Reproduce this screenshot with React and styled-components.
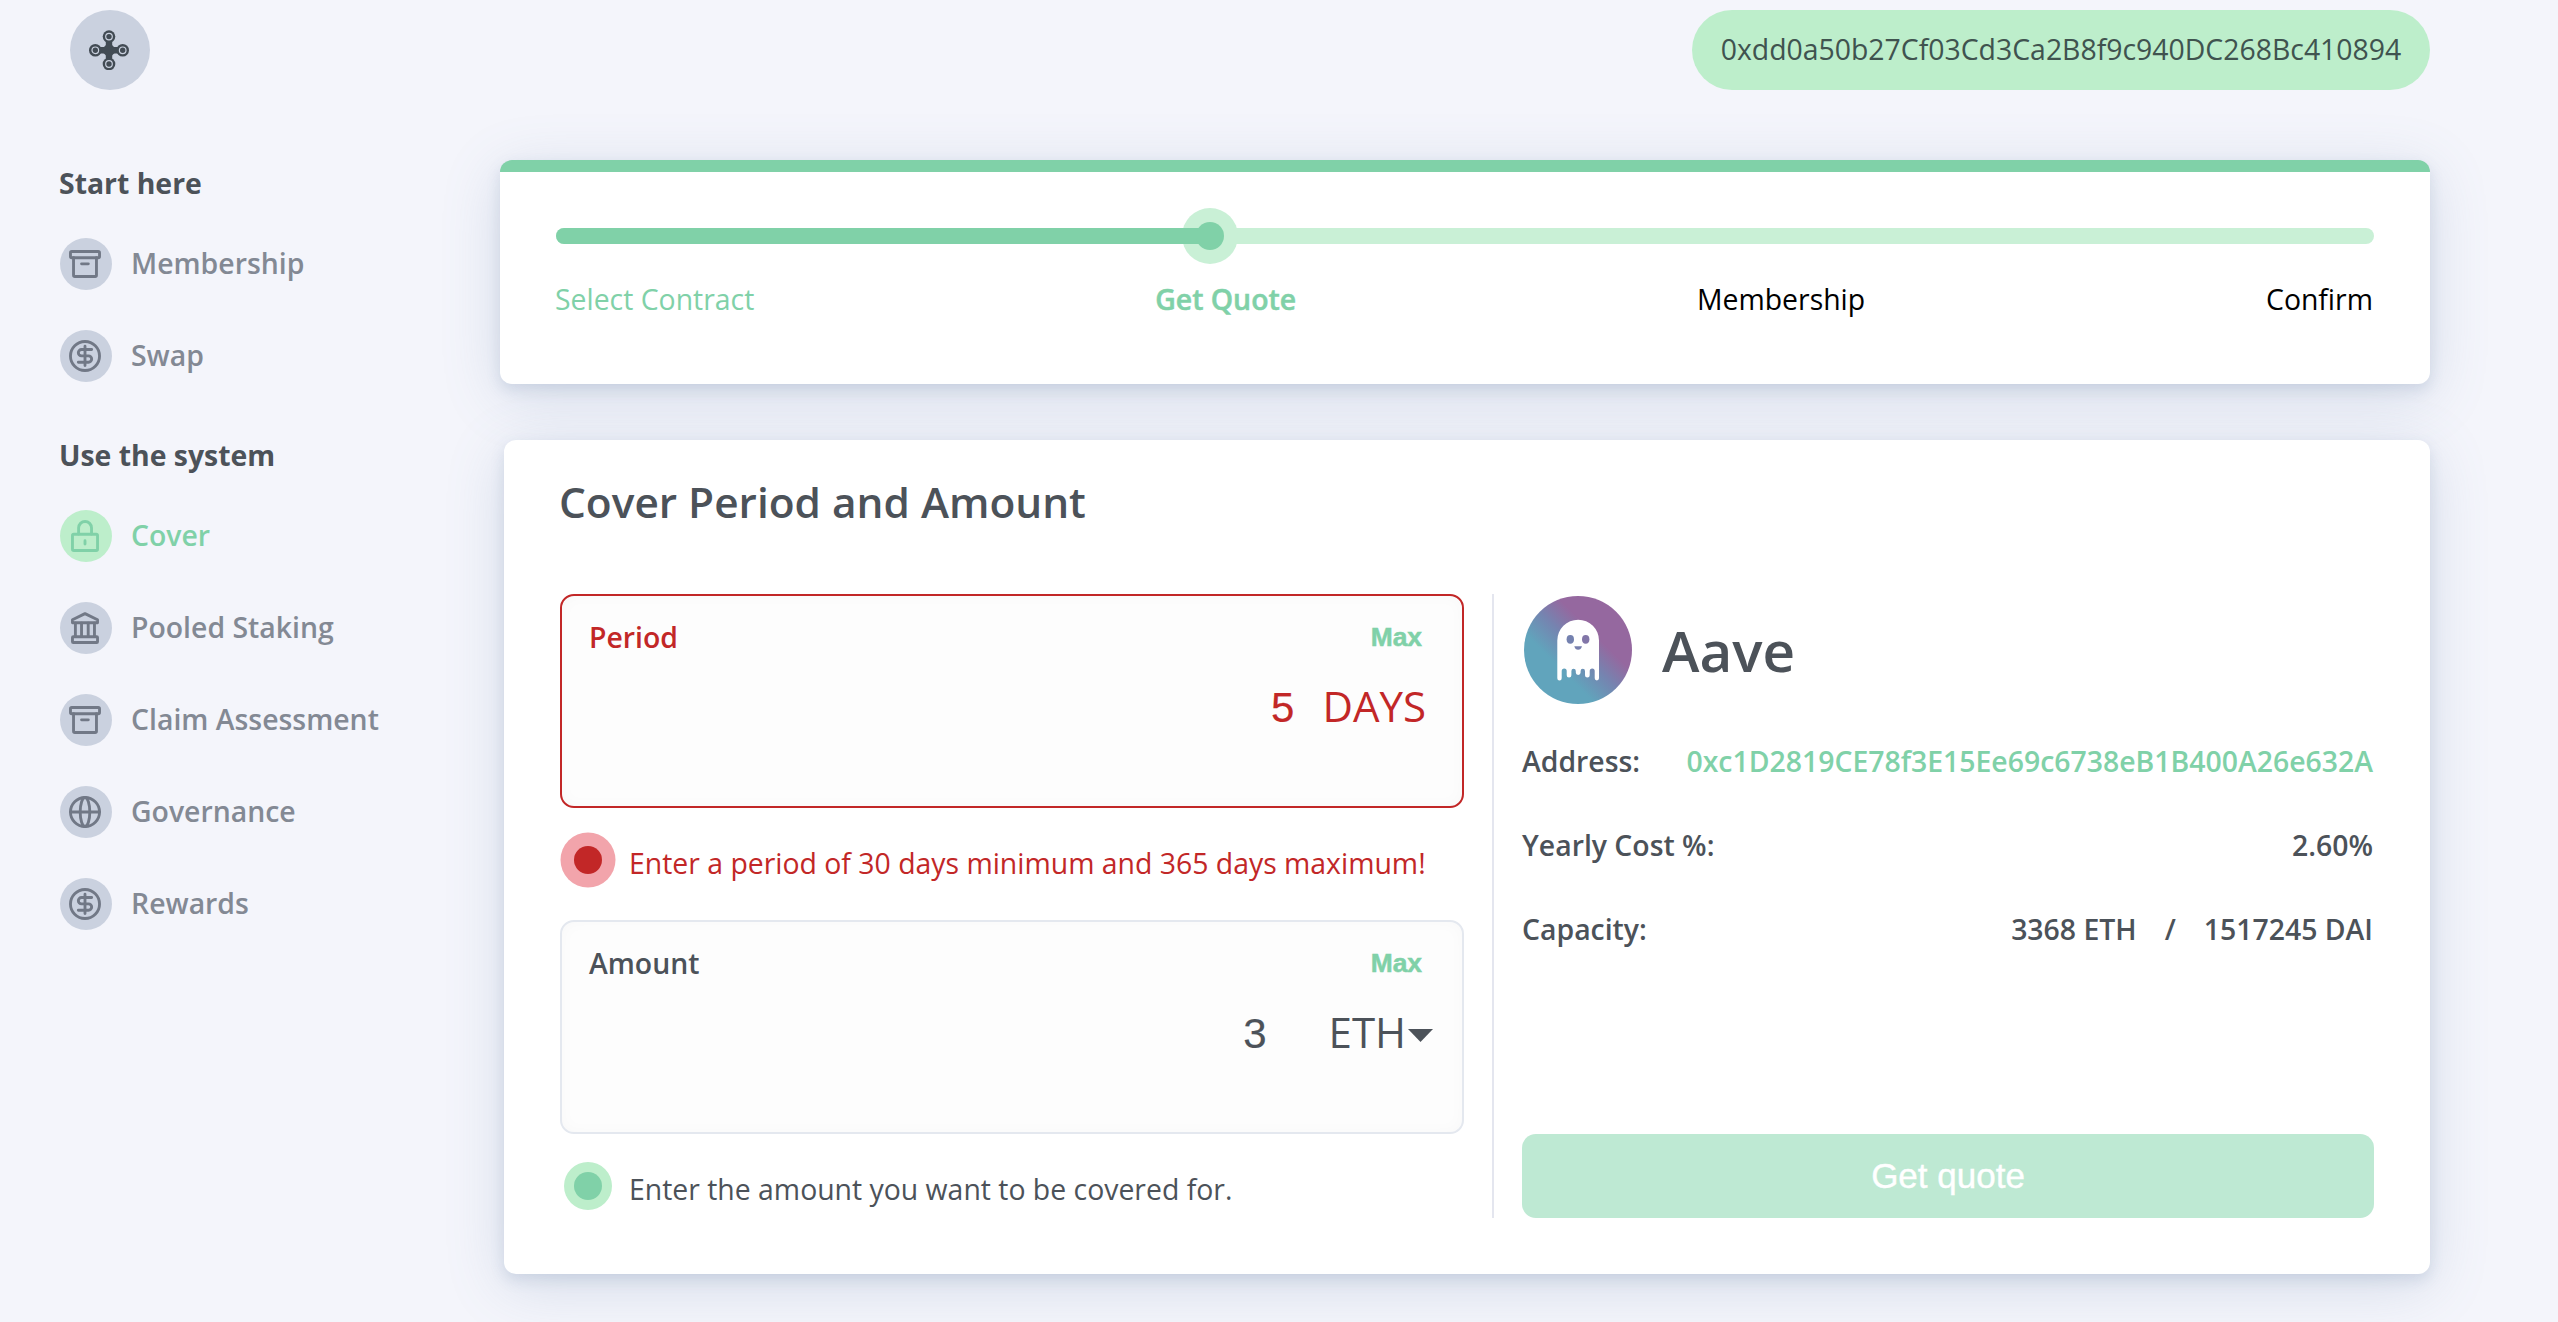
import React from "react";
import styled, { createGlobalStyle } from "styled-components";

const color = {
  page: "#f4f5fb",
  text: "#4c5259",
  muted: "#838994",
  icon: "#717886",
  iconDark: "#424b54",
  disc: "#cad1df",
  primary: "#80d1a8",
  primaryLight: "#bdeecb",
  track: "#c9f0d6",
  disabled: "#bee9d3",
  error: "#c22727",
  errorLight: "#f2a4ab",
  line: "#e4e6ef",
};

const GlobalStyle = createGlobalStyle`
  * { box-sizing: border-box; }
  body {
    margin: 0;
    background: ${color.page};
    color: ${color.text};
    font-family: "Open Sans", "Noto Sans", sans-serif;
    font-size: 28.4px;
    line-height: 38px;
  }
`;

const Page = styled.div`
  height: 1322px;
  overflow: hidden;
  white-space: nowrap;
`;

const Header = styled.header`
  display: flex;
  justify-content: space-between;
  width: 2430px;
  padding: 10px 0 0 70px;
`;

const LogoDisc = styled.div`
  display: flex;
  align-items: center;
  justify-content: center;
  width: 80px;
  height: 80px;
  padding-right: 2px;
  border-radius: 50%;
  background: ${color.disc};
`;

const AccountPill = styled.div`
  display: flex;
  align-items: center;
  justify-content: center;
  width: 738px;
  height: 80px;
  padding-bottom: 2px;
  border-radius: 40px;
  background: ${color.primaryLight};
  color: #40534f;
`;

const Body = styled.div`
  display: flex;
`;

const Sidebar = styled.nav`
  flex: none;
  display: flex;
  flex-direction: column;
  gap: 54px;
  width: 500px;
  padding: 74px 0 0 59px;
`;

const NavGroup = styled.section`
  display: flex;
  flex-direction: column;
  gap: 36px;
`;

const NavHeading = styled.h3`
  margin: 0;
  font-size: inherit;
  font-weight: 700;
`;

const NavList = styled.div`
  display: flex;
  flex-direction: column;
  gap: 40px;
  padding-left: 1px;
`;

const NavItem = styled.a`
  display: flex;
  align-items: center;
  gap: 19px;
  font-weight: 600;
  color: ${(p) => (p.$active ? color.primary : color.muted)};
`;

const NavDisc = styled.span`
  display: flex;
  align-items: center;
  justify-content: center;
  width: 52px;
  height: 52px;
  padding-right: 2px;
  border-radius: 50%;
  background: ${(p) => (p.$active ? color.primaryLight : color.disc)};
  color: ${(p) => (p.$active ? color.primary : color.icon)};
`;

const NavLabel = styled.span`
  padding-bottom: 2px;
`;

const Main = styled.main`
  display: flex;
  flex-direction: column;
  align-items: flex-end;
  gap: 56px;
  width: 1930px;
  padding-top: 70px;
`;

const Card = styled.section`
  border-radius: 12px;
  background: #fff;
  box-shadow:
    0 6px 14px rgba(90, 118, 160, 0.17),
    0 12px 60px rgba(90, 118, 160, 0.2);
`;

const StepsCard = styled(Card)`
  width: 1930px;
  height: 224px;
  padding: 56px;
  border-top: 12px solid ${color.primary};
`;

const Track = styled.div`
  position: relative;
  height: 16px;
  border-radius: 8px;
  background: ${color.track};
`;

const TrackFill = styled.div`
  position: relative;
  width: 36%;
  height: 16px;
  border-radius: 8px;
  background: ${color.primary};
`;

const ThumbPart = styled.span`
  position: absolute;
  top: 50%;
  left: 36%;
  width: ${(p) => p.$size}px;
  height: ${(p) => p.$size}px;
  border-radius: 50%;
  background: ${(p) => p.$color};
  transform: translate(-50%, -50%);
`;

const StepLabels = styled.div`
  display: flex;
  justify-content: space-between;
  margin: 36px 1px 0 -1px;
`;

const StepLabel = styled.span`
  color: ${(p) => (p.$reached ? color.primary : "#000")};
  font-weight: ${(p) => (p.$current ? 600 : 400)};
  -webkit-text-stroke: ${(p) => (p.$current ? `0.5px ${color.primary}` : "0")};
`;

const QuoteCard = styled(Card)`
  width: 1926px;
  height: 834px;
  padding: 33px 56px 56px;
`;

const Title = styled.h2`
  margin: 0 0 63px -1px;
  font-size: 42.4px;
  font-weight: 600;
  line-height: 58px;
`;

const Columns = styled.div`
  display: grid;
  grid-template-columns: 934px 852px;
  grid-template-rows: 624px;
  column-gap: 28px;
`;

const FormColumn = styled.div`
  display: flex;
  flex-direction: column;
  gap: 32px;
  padding-right: 28px;
  border-right: 2px solid ${color.line};
`;

const FieldGroup = styled.div`
  display: flex;
  flex-direction: column;
`;

const Field = styled.div`
  height: 214px;
  padding: 22px 0 0 27px;
  border: 2px solid ${(p) => (p.$error ? color.error : "#e4e8ef")};
  border-radius: 14px;
  background: #fdfdfd;
  box-shadow: inset 0 0 16px rgba(0, 0, 0, 0.025);
  color: ${(p) => (p.$error ? color.error : color.text)};
`;

const FieldTop = styled.div`
  display: flex;
  align-items: center;
  justify-content: space-between;
  height: 38px;
  padding-right: 40px;
  font-weight: 600;
`;

const MaxButton = styled.button`
  padding: 0;
  border: 0;
  background: none;
  color: ${color.primary};
  font: 700 26.4px/30px "Liberation Sans", Arial, sans-serif;
  -webkit-text-stroke: 0.5px ${color.primary};
`;

const FieldValue = styled.div`
  display: flex;
  align-items: baseline;
  justify-content: flex-end;
  gap: ${(p) => p.$gap}px;
  margin-top: 21px;
  padding-right: ${(p) => p.$inset}px;
  font-size: 42px;
  line-height: 57px;
`;

const Digits = styled.span`
  font-family: "Liberation Sans", Arial, sans-serif;
  line-height: 48px;
  -webkit-text-stroke: 0.2px currentColor;
`;

const UnitSelect = styled.span`
  display: flex;
  align-items: center;
  gap: 2px;
`;

const Caret = styled.svg`
  margin-top: 7px;
`;

const Hint = styled.div`
  display: flex;
  align-items: center;
  gap: 27px;
  height: 56px;
  margin: 24px 0 0 14px;
  color: ${(p) => (p.$error ? color.error : color.text)};
`;

const Pulse = styled.span`
  width: 28px;
  height: 28px;
  border-radius: 50%;
  background: ${(p) => (p.$error ? color.error : color.primary)};
  box-shadow: 0 0 0
    ${(p) => (p.$error ? `13.5px ${color.errorLight}` : `10px ${color.primaryLight}`)};
`;

const HintText = styled.span`
  padding-top: 6px;
`;

const InfoColumn = styled.div`
  display: flex;
  flex-direction: column;
`;

const Contract = styled.div`
  display: flex;
  align-items: center;
  gap: 30px;
  height: 112px;
  padding-left: 2px;
`;

const ContractName = styled.span`
  padding-top: 2px;
  font-size: 56.6px;
  font-weight: 600;
  line-height: 78px;
`;

const Facts = styled.div`
  display: flex;
  flex-direction: column;
  gap: 46px;
  margin-top: 36px;
  padding-right: 1px;
  font-weight: 600;
`;

const Fact = styled.div`
  display: flex;
  justify-content: space-between;
`;

const FactValue = styled.span`
  display: flex;
  gap: 28px;
  color: ${(p) => (p.$link ? color.primary : color.text)};
`;

const SubmitButton = styled.button`
  height: 84px;
  margin-top: auto;
  padding: 0;
  border: 0;
  border-radius: 14px;
  background: ${color.disabled};
  color: #fff;
  font: 400 35px/40px "Liberation Sans", Arial, sans-serif;
  -webkit-text-stroke: 0.4px #fff;
`;

const IconSvg = ({ children }) => (
  <svg
    width="32"
    height="32"
    viewBox="0 0 24 24"
    fill="none"
    stroke="currentColor"
    strokeWidth="2.15"
    strokeLinecap="round"
    strokeLinejoin="round"
  >
    {children}
  </svg>
);

const ArchiveIcon = () => (
  <IconSvg>
    <rect x="1.1" y="2.6" width="21.8" height="4.7" rx="1" />
    <path d="M3.4 7.3V20.4a1 1 0 0 0 1 1H19.6a1 1 0 0 0 1-1V7.3M9.4 11.9H14.5" />
  </IconSvg>
);

const DollarIcon = () => (
  <IconSvg>
    <circle cx="12" cy="12" r="10.9" />
    <path d="M12 4.7V19.1M17 7.1H9.4a2.4 2.4 0 0 0 0 4.8h5.2a2.4 2.4 0 0 1 0 4.8H7" />
  </IconSvg>
);

const LockIcon = () => (
  <IconSvg>
    <rect x="2.6" y="10.7" width="18.8" height="12.2" rx="1" />
    <path d="M7.2 10.5V5.95a4.85 4.85 0 0 1 9.7 0V10.5M12 15.5V18" />
  </IconSvg>
);

const BankIcon = () => (
  <IconSvg>
    <path d="M12 1.2L21.4 5.8V8.1H2.6V5.8Z" />
    <rect x="2.6" y="18.6" width="18.8" height="4.3" rx="0.6" />
    <path d="M4.8 8.4V18.3M9.4 8.4V18.3M14.4 8.4V18.3M19.1 8.4V18.3" />
  </IconSvg>
);

const GlobeIcon = () => (
  <IconSvg>
    <circle cx="12" cy="12" r="10.9" />
    <ellipse cx="12" cy="12" rx="3.6" ry="10.9" />
    <path d="M1.1 12H22.9" />
  </IconSvg>
);

const hubs = [
  [20, 6.6],
  [6.3, 20.3],
  [33.7, 20.3],
  [20, 34],
];

const SpinnerLogo = () => (
  <svg width="40" height="40.6" viewBox="0 0 40 40.6" fill={color.iconDark}>
    <path d="M20 7V34M7 20.3H33" stroke={color.iconDark} strokeWidth="6.4" />
    <path d="M20 12L28.3 20.3L20 28.6L11.7 20.3Z" />
    {hubs.map(([x, y]) => (
      <g key={`${x}-${y}`}>
        <circle cx={x} cy={y} r="6.3" />
        <circle cx={x} cy={y} r="3.3" fill="none" stroke={color.disc} strokeWidth="1.2" />
      </g>
    ))}
  </svg>
);

const AaveLogo = () => (
  <svg width="108" height="108" viewBox="0 0 108 108">
    <defs>
      <linearGradient id="aave" gradientUnits="userSpaceOnUse" x1="0" y1="108" x2="108" y2="0">
        <stop offset="0.33" stopColor="#61a4bc" />
        <stop offset="0.5" stopColor="#7584b0" />
        <stop offset="0.65" stopColor="#95689f" />
      </linearGradient>
    </defs>
    <circle cx="54" cy="54" r="54" fill="url(#aave)" />
    <path
      fill="#fff"
      d="M33.3 44.5a20.85 20.85 0 0 1 41.7 0V82.3a2.1 2.1 0 0 1-4.3 0V75a2.5 2.5 0 0 0-5 0V79.2a2.3 2.3 0 0 1-4.7 0V75a2.2 2.2 0 0 0-4.4 0V76.6a2.4 2.4 0 0 1-4.8 0V75a2.2 2.2 0 0 0-4.4 0V79.2a2.3 2.3 0 0 1-4.7 0V75a2.5 2.5 0 0 0-5 0V82.3a2.1 2.1 0 0 1-4.4 0Z"
    />
    <ellipse cx="46.3" cy="43.3" rx="3.7" ry="4.4" fill="#7481af" />
    <ellipse cx="61.7" cy="43.3" rx="3.7" ry="4.4" fill="#8276a8" />
    <path d="M50.3 50.3H58C57.4 52.8 56 53.8 54.1 53.8S50.9 52.8 50.3 50.3Z" fill="#777fad" />
  </svg>
);

const navigation = [
  {
    heading: "Start here",
    items: [
      { label: "Membership", Icon: ArchiveIcon },
      { label: "Swap", Icon: DollarIcon },
    ],
  },
  {
    heading: "Use the system",
    items: [
      { label: "Cover", Icon: LockIcon, active: true },
      { label: "Pooled Staking", Icon: BankIcon },
      { label: "Claim Assessment", Icon: ArchiveIcon },
      { label: "Governance", Icon: GlobeIcon },
      { label: "Rewards", Icon: DollarIcon },
    ],
  },
];

const Steps = () => (
  <StepsCard>
    <Track>
      <ThumbPart $size={56} $color={color.track} />
      <TrackFill />
      <ThumbPart $size={28} $color={color.primary} />
    </Track>
    <StepLabels>
      <StepLabel $reached>Select Contract</StepLabel>
      <StepLabel $reached $current>Get Quote</StepLabel>
      <StepLabel>Membership</StepLabel>
      <StepLabel>Confirm</StepLabel>
    </StepLabels>
  </StepsCard>
);

const ValueField = ({ label, hint, error, gap, inset, digits, children }) => (
  <FieldGroup>
    <Field $error={error}>
      <FieldTop>
        <span>{label}</span>
        <MaxButton>Max</MaxButton>
      </FieldTop>
      <FieldValue $gap={gap} $inset={inset}>
        <Digits>{digits}</Digits>
        {children}
      </FieldValue>
    </Field>
    <Hint $error={error}>
      <Pulse $error={error} />
      <HintText>{hint}</HintText>
    </Hint>
  </FieldGroup>
);

export default function App() {
  return (
    <>
      <GlobalStyle />
      <Page>
        <Header>
          <LogoDisc>
            <SpinnerLogo />
          </LogoDisc>
          <AccountPill>0xdd0a50b27Cf03Cd3Ca2B8f9c940DC268Bc410894</AccountPill>
        </Header>
        <Body>
          <Sidebar>
            {navigation.map(({ heading, items }) => (
              <NavGroup key={heading}>
                <NavHeading>{heading}</NavHeading>
                <NavList>
                  {items.map(({ label, Icon, active }) => (
                    <NavItem key={label} $active={active}>
                      <NavDisc $active={active}>
                        <Icon />
                      </NavDisc>
                      <NavLabel>{label}</NavLabel>
                    </NavItem>
                  ))}
                </NavList>
              </NavGroup>
            ))}
          </Sidebar>
          <Main>
            <Steps />
            <QuoteCard>
              <Title>Cover Period and Amount</Title>
              <Columns>
                <FormColumn>
                  <ValueField
                    error
                    label="Period"
                    digits="5"
                    gap={28}
                    inset={36}
                    hint="Enter a period of 30 days minimum and 365 days maximum!"
                  >
                    <span>DAYS</span>
                  </ValueField>
                  <ValueField
                    label="Amount"
                    digits="3"
                    gap={62}
                    inset={29}
                    hint="Enter the amount you want to be covered for."
                  >
                    <UnitSelect>
                      ETH
                      <Caret width="25" height="13" viewBox="0 0 25 13">
                        <path d="M0 0H25L12.5 13Z" fill={color.text} />
                      </Caret>
                    </UnitSelect>
                  </ValueField>
                </FormColumn>
                <InfoColumn>
                  <Contract>
                    <AaveLogo />
                    <ContractName>Aave</ContractName>
                  </Contract>
                  <Facts>
                    <Fact>
                      <span>Address:</span>
                      <FactValue $link>0xc1D2819CE78f3E15Ee69c6738eB1B400A26e632A</FactValue>
                    </Fact>
                    <Fact>
                      <span>Yearly Cost %:</span>
                      <FactValue>2.60%</FactValue>
                    </Fact>
                    <Fact>
                      <span>Capacity:</span>
                      <FactValue>
                        <span>3368 ETH</span>
                        <span>/</span>
                        <span>1517245 DAI</span>
                      </FactValue>
                    </Fact>
                  </Facts>
                  <SubmitButton>Get quote</SubmitButton>
                </InfoColumn>
              </Columns>
            </QuoteCard>
          </Main>
        </Body>
      </Page>
    </>
  );
}
